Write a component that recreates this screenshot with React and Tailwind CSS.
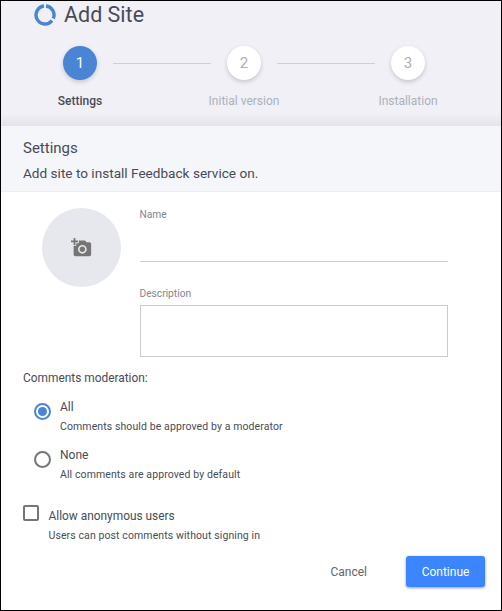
import React from "react";
import { MdAddAPhoto } from "react-icons/md";

const steps = [
  { number: 1, label: "Settings", active: true },
  { number: 2, label: "Initial version", active: false },
  { number: 3, label: "Installation", active: false },
];

function Step({ number, label, active }) {
  return (
    <div className="flex w-[34px] flex-col items-center">
      <div
        className={
          active
            ? "flex size-[34px] items-center justify-center rounded-full bg-[#4a84d4] text-[15px] text-white shadow-[0_2px_4px_rgba(50,50,80,0.22)]"
            : "flex size-[34px] items-center justify-center rounded-full bg-white text-[15px] text-[#a9b0b9] shadow-[0_2px_4px_rgba(50,50,80,0.22)]"
        }
      >
        {number}
      </div>
      <span
        className={
          active
            ? "mt-[13px] whitespace-nowrap text-[12px] leading-4 font-medium text-[#484b57]"
            : "mt-[13px] whitespace-nowrap text-[12px] leading-4 text-[#abb1bb]"
        }
      >
        {label}
      </span>
    </div>
  );
}

function Stepper() {
  return (
    <div className="mt-[17px] ml-[62px] flex items-start">
      {steps.map((step, i) => (
        <React.Fragment key={step.number}>
          {i > 0 && <div className="mx-4 mt-[17px] h-px w-[98px] bg-[#cfd0d5]" />}
          <Step {...step} />
        </React.Fragment>
      ))}
    </div>
  );
}

function Radio({ checked, label, hint }) {
  return (
    <div className="flex h-[48px]">
      <div
        className={
          checked
            ? "mt-[4px] flex size-[17px] items-center justify-center rounded-full border-2 border-[#4a84d4]"
            : "mt-[4px] size-[17px] rounded-full border-2 border-[#757575]"
        }
      >
        {checked && <div className="size-[9px] rounded-full bg-[#4a84d4]" />}
      </div>
      <div className="ml-[9px]">
        <div className="text-[12px] leading-4">{label}</div>
        <div className="mt-1 text-[10.5px] leading-4 tracking-[0.1px]">{hint}</div>
      </div>
    </div>
  );
}

export default function App() {
  return (
    <div className="flex h-[611px] w-[502px] flex-col overflow-hidden border border-black bg-white font-['Roboto',sans-serif] text-[#484b57]">
      <header className="h-[125px] bg-linear-to-b from-[#f0f0f6] from-90% to-[#e3e3e9]">
        <div className="flex h-[28px] items-center pl-[33px]">
          <svg className="size-[22px]" viewBox="0 0 22 22" fill="none" stroke="#4a84d4" strokeWidth="3.4">
            <path d="M12 2.05A9 9 0 0 1 19.3 14.5" />
            <path d="M18 16.7A9 9 0 1 1 10 2.05" />
          </svg>
          <h1 className="ml-[8px] text-[21.5px] leading-7">Add Site</h1>
        </div>
        <Stepper />
      </header>

      <section className="h-[66px] border-b border-[#eeeef2] bg-[#f5f6fa] pt-[12px] pl-[22px]">
        <h2 className="text-[15px] leading-5">Settings</h2>
        <p className="mt-[5px] text-[13.6px] leading-5">Add site to install Feedback service on.</p>
      </section>

      <div className="flex h-[178px] pt-[16px] pl-[41px]">
        <div className="flex size-[79px] items-center justify-center rounded-full bg-[#e7e8ee]">
          <MdAddAPhoto className="size-[21px] text-[#757575]" />
        </div>
        <div className="ml-[18.5px] w-[308.5px] text-[10.2px] leading-3 text-[#808594]">
          <label className="block pt-px">Name</label>
          <input className="block h-[41px] w-full border-b border-[#cfcfcf] outline-none" />
          <label className="mt-[26px] block">Description</label>
          <textarea className="mt-[5px] block h-[52px] w-full resize-none border border-[#cbcbcb] outline-none" />
        </div>
      </div>

      <div className="pl-[22px]">
        <div className="text-[11.9px] leading-4">Comments moderation:</div>
        <div className="mt-[13px] pl-[11px]">
          <Radio checked label="All" hint="Comments should be approved by a moderator" />
          <Radio label="None" hint="All comments are approved by default" />
        </div>
        <div className="mt-[10px] flex">
          <div className="size-[16px] rounded-[2px] border-2 border-[#757575]" />
          <div className="ml-[9.5px] pt-[3px]">
            <div className="text-[11.9px] leading-4">Allow anonymous users</div>
            <div className="mt-1 text-[10.5px] leading-4 tracking-[0.1px]">Users can post comments without signing in</div>
          </div>
        </div>
      </div>

      <div className="mt-[12px] flex justify-end pr-[16px] text-[12px]">
        <button className="mr-[39px] text-[#62646c]">Cancel</button>
        <button className="h-[31px] w-[79px] rounded-[3px] bg-[#3b86ff] text-white shadow-[0_1px_3px_rgba(0,0,0,0.4)]">Continue</button>
      </div>
    </div>
  );
}
